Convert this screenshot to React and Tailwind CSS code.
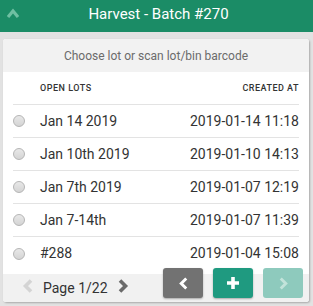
const LOTS = [
  { name: 'Jan 14 2019', created: '2019-01-14 11:18' },
  { name: 'Jan 10th 2019', created: '2019-01-10 14:13' },
  { name: 'Jan 7th 2019', created: '2019-01-07 12:19' },
  { name: 'Jan 7-14th', created: '2019-01-07 11:39' },
  { name: '#288', created: '2019-01-04 15:08' }
];

// chunky chevrons, drawn in a 12x14 box
const CHEVRONS = {
  left: 'M9 1.5L3.5 7 9 12.5',
  right: 'M3 1.5L8.5 7 3 12.5',
  up: 'M1 10L6 4l5 6'
};

function Chevron({ dir, className, width = 3.6 }) {
  const vb = dir === 'up' ? '0 0 12 12' : '0 0 12 14';
  return (
    <svg className={className} viewBox={vb} fill="none" stroke="currentColor" strokeWidth={width} strokeLinejoin="miter">
      <path d={CHEVRONS[dir]} />
    </svg>
  );
}

export default function App() {
  return (
    <div className="w-[313px] h-[306px] bg-[#e2e2e2] overflow-hidden" style={{ fontFamily: 'Roboto, "Liberation Sans", sans-serif' }}>
      <div className="h-[32px] bg-[#1b8c66] relative">
        <Chevron dir="up" className="absolute left-[7px] top-[7px] w-[12px] h-[12px] text-[#6fbfa2]" width={3.2} />
        <div className="text-center text-white text-[15px] leading-[18px] pt-[5px] pl-[4px]">Harvest - Batch #270</div>
      </div>

      <div className="mx-[3px] mt-[7px] w-[306px] bg-white rounded-[3px] shadow-[1px_1px_2px_rgba(0,0,0,0.25)] overflow-hidden">
        <div className="h-[33px] bg-[#f2f2f2] flex items-center justify-center text-[12px] text-[#6b6b6b]">
          Choose lot or scan lot/bin barcode
        </div>

        <div className="px-[10px]">
          <div className="h-[33px] flex items-end justify-between pb-[9px] border-b border-[#e3e3e3] text-[9px] font-medium tracking-[0.5px] text-[#333]">
            <span className="pl-[27px]">OPEN LOTS</span>
            <span>CREATED AT</span>
          </div>
          {LOTS.map((lot, i) => (
            <div key={lot.name} className={'h-[33px] flex items-center text-[14px] text-[#333] ' + (i < LOTS.length - 1 ? 'border-b border-[#e3e3e3]' : '')}>
              <span className="w-[12px] h-[12px] rounded-full border border-[#b5b5b5] bg-gradient-to-b from-[#e8e8e8] to-[#d4d4d4]" />
              <span className="ml-[15px] flex-1">{lot.name}</span>
              <span>{lot.created}</span>
            </div>
          ))}
        </div>

        <div className="h-[28px] mt-[4px] bg-[#f1f1f1] flex items-start relative">
          <Chevron dir="left" className="absolute left-[19px] top-[5px] w-[12px] h-[14px] text-[#d4d4d4]" />
          <span className="absolute left-[40px] top-[4px] text-[14px] text-[#333]">Page 1/22</span>
          <Chevron dir="right" className="absolute left-[114px] top-[5px] w-[12px] h-[14px] text-[#6a6a6a]" />
          <div className="ml-auto mr-[6px] -mt-[6px] flex gap-[10px]">
            <button className="w-[40px] h-[30px] rounded-[3px] bg-[#727272] flex items-center justify-center shadow-[0_1px_2px_rgba(0,0,0,0.3)]">
              <Chevron dir="left" className="w-[11px] h-[13px] text-white" width={3.2} />
            </button>
            <button className="w-[40px] h-[30px] rounded-[3px] bg-[#1f9a80] flex items-center justify-center shadow-[0_1px_2px_rgba(0,0,0,0.3)]">
              <svg className="w-[14px] h-[14px]" viewBox="0 0 14 14"><path d="M7 1v12M1 7h12" stroke="white" strokeWidth="3.6" /></svg>
            </button>
            <button className="w-[40px] h-[30px] rounded-[3px] bg-[#8ecabd] flex items-center justify-center">
              <Chevron dir="right" className="w-[11px] h-[13px] text-[#c2e3da]" width={3.2} />
            </button>
          </div>
        </div>
      </div>
    </div>
  );
}
